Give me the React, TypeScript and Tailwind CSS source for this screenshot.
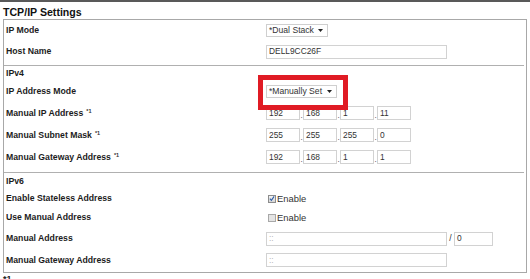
import React from 'react'

const font = "font-['Liberation_Sans',Arial,sans-serif]"

function Label({ text, note }: { text: string; note?: boolean }) {
  return (
    <div className="w-[262px] shrink-0 pl-[2px] pb-[1px] text-[8.7px] font-bold text-[#1c1c1c] leading-[10px]">
      {text}
      {note && <sup className="ml-[3px] text-[5.5px] font-bold text-[#333]">*1</sup>}
    </div>
  )
}

function Select({ value, w }: { value: string; w: string }) {
  return (
    <div
      className={`${w} h-[13px] border border-[#cfcfcf] bg-white flex items-center justify-between pl-[2px] pr-[4px] text-[8.6px] text-[#333] leading-none`}
    >
      <span>{value}</span>
      <svg width="5" height="3" viewBox="0 0 5 3">
        <path d="M0 0 L5 0 L2.5 3 Z" fill="#222" />
      </svg>
    </div>
  )
}

function TextBox({ value, w, faint }: { value: string; w: string; faint?: boolean }) {
  return (
    <div
      className={`${w} h-[14px] border border-[#d2d2d2] bg-white flex items-center px-[2px] text-[8.4px] leading-none ${
        faint ? 'text-[#b5b5b5]' : 'text-[#333]'
      }`}
    >
      {value}
    </div>
  )
}

function IpFields({ parts }: { parts: string[] }) {
  return (
    <div className="flex items-end">
      {parts.map((p, i) => (
        <div key={i} className="flex items-end">
          {i > 0 && <span className="w-[3px] text-center text-[8px] leading-[8px] text-[#333]">.</span>}
          <TextBox value={p} w="w-[34px]" />
        </div>
      ))}
    </div>
  )
}

function Check({ checked }: { checked?: boolean }) {
  return (
    <div className="ml-[2px] flex items-center gap-[1px]">
      <span
        className={`w-[8px] h-[8px] border flex items-center justify-center ${
          checked ? 'border-[#8c8c8c] bg-gradient-to-b from-[#f4f4f4] to-[#d6d6d6]' : 'border-[#a8a8a8] bg-[#e4e4e4]'
        }`}
      >
        {checked && (
          <svg width="7" height="7" viewBox="0 0 7 7">
            <path d="M1 3.6 L2.8 5.6 L6 1" fill="none" stroke="#2e5ea8" strokeWidth="1.3" />
          </svg>
        )}
      </span>
      <span className="text-[9.4px] text-[#333] leading-none">Enable</span>
    </div>
  )
}

function Row({ h, children }: { h: string; children: React.ReactNode }) {
  return <div className={`${h} flex items-center`}>{children}</div>
}

export default function App() {
  return (
    <div className={`w-[530px] h-[279px] overflow-hidden bg-white ${font}`}>
      <div className="h-[2px] bg-[#595959]" />
      <div className="h-[17px] pt-[4px] pl-[3px] text-[10.6px] font-bold text-[#111] leading-[12px]">
        TCP/IP Settings
      </div>

      {/* panel */}
      <div className="ml-[3px] w-[524px] border border-[#a8a8a8]">
        {/* general */}
        <div className="pb-[3px] mr-[2px] border-b border-[#b0b0b0]">
          <Row h="h-[21px]">
            <Label text="IP Mode" />
            <Select value="*Dual Stack" w="w-[62px]" />
          </Row>
          <Row h="h-[21px]">
            <Label text="Host Name" />
            <TextBox value="DELL9CC26F" w="w-[181px]" />
          </Row>
        </div>

        {/* IPv4 */}
        <div className="pb-[4px] mr-[2px] border-b border-[#b0b0b0]">
          <Row h="h-[15px]">
            <Label text="IPv4" />
          </Row>
          <Row h="h-[21px]">
            <Label text="IP Address Mode" />
            <div className="relative">
              <Select value="*Manually Set" w="w-[71px]" />
              <div className="absolute left-[-8px] top-[-10px] w-[90px] h-[35px] border-[5px] border-[#e01b24]" />
            </div>
          </Row>
          <Row h="h-[22px]">
            <Label text="Manual IP Address" note />
            <IpFields parts={['192', '168', '1', '11']} />
          </Row>
          <Row h="h-[22px]">
            <Label text="Manual Subnet Mask" note />
            <IpFields parts={['255', '255', '255', '0']} />
          </Row>
          <Row h="h-[22px]">
            <Label text="Manual Gateway Address" note />
            <IpFields parts={['192', '168', '1', '1']} />
          </Row>
        </div>

        {/* IPv6 */}
        <div className="pb-[1px]">
          <Row h="h-[17px]">
            <Label text="IPv6" />
          </Row>
          <Row h="h-[17px]">
            <Label text="Enable Stateless Address" />
            <Check checked />
          </Row>
          <Row h="h-[21px]">
            <Label text="Use Manual Address" />
            <Check />
          </Row>
          <Row h="h-[21px]">
            <Label text="Manual Address" />
            <TextBox value="::" w="w-[181px]" faint />
            <span className="w-[7px] text-center text-[8.6px] text-[#333] leading-none">/</span>
            <TextBox value="0" w="w-[39px]" />
          </Row>
          <Row h="h-[22px]">
            <Label text="Manual Gateway Address" />
            <TextBox value="::" w="w-[181px]" faint />
          </Row>
        </div>
      </div>

      <div className="pt-[1px] pl-[3px] text-[9px] font-bold text-[#222] leading-[10px]">*1</div>
    </div>
  )
}
